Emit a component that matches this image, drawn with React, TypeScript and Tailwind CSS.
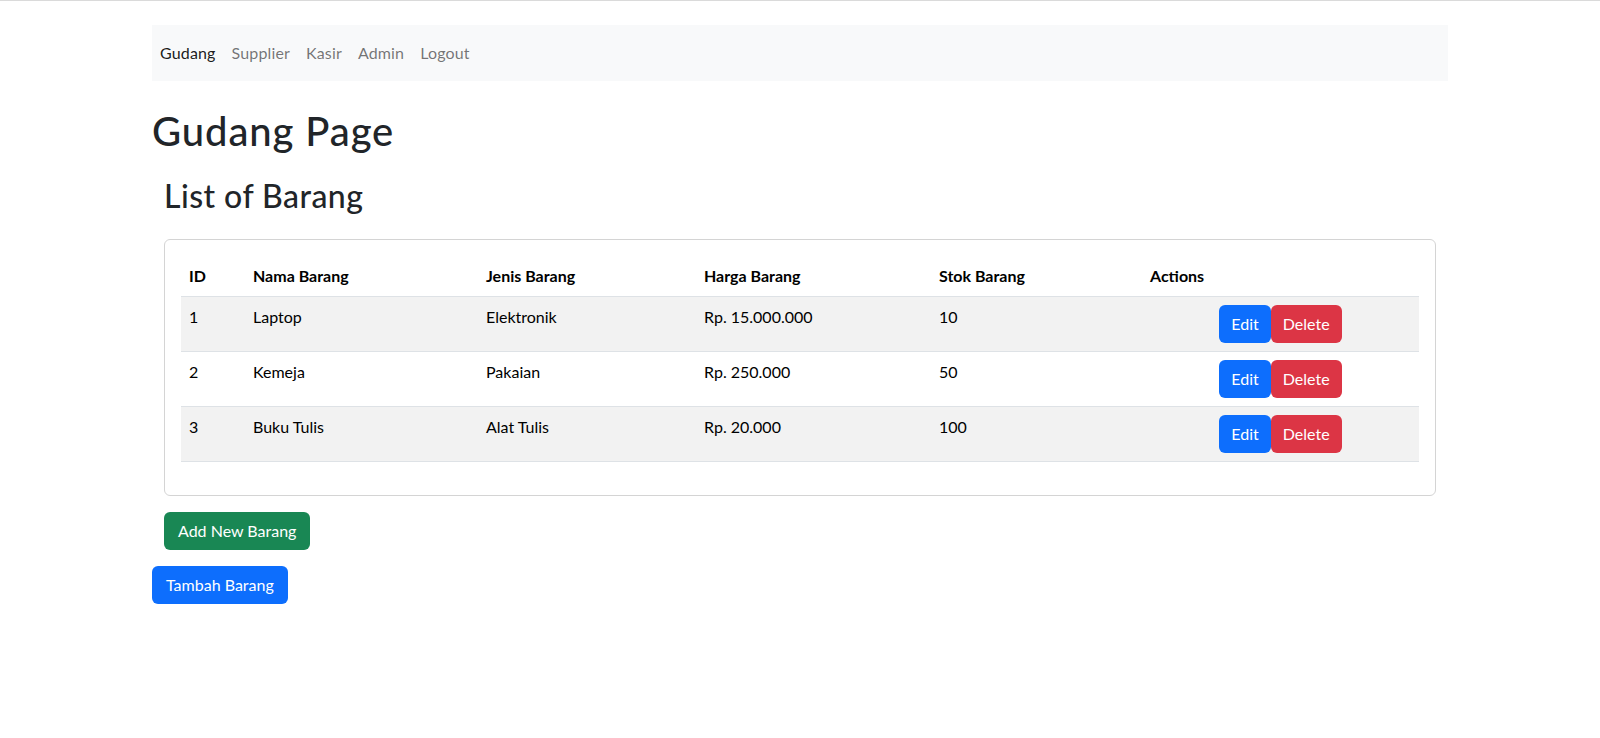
import React from 'react';

interface Barang {
  id: number;
  nama: string;
  jenis: string;
  harga: string;
  stok: number;
}

const barangList: Barang[] = [
  { id: 1, nama: 'Laptop', jenis: 'Elektronik', harga: 'Rp. 15.000.000', stok: 10 },
  { id: 2, nama: 'Kemeja', jenis: 'Pakaian', harga: 'Rp. 250.000', stok: 50 },
  { id: 3, nama: 'Buku Tulis', jenis: 'Alat Tulis', harga: 'Rp. 20.000', stok: 100 },
];

const navLinks = ['Gudang', 'Supplier', 'Kasir', 'Admin', 'Logout'];

export default function App() {
  return (
    <div
      className="min-h-screen bg-white border-t border-[#dadada] text-[#212529]"
      style={{ fontFamily: 'Lato, "Noto Sans", sans-serif' }}
    >
      <div className="mx-auto w-[1320px] px-3 pt-6">
        <nav className="flex h-14 items-center bg-[#f8f9fa]">
          <ul className="flex">
            {navLinks.map((link, i) => (
              <li key={link}>
                <a
                  href="#"
                  className={`block px-2 text-base leading-6 tracking-[0.15px] ${
                    i === 0 ? 'text-black/90' : 'text-black/55'
                  }`}
                >
                  {link}
                </a>
              </li>
            ))}
          </ul>
        </nav>

        <h1 className="mt-[26px] mb-2 text-[40px] font-medium leading-[48px] tracking-[0.9px]">
          Gudang Page
        </h1>

        <div className="px-3 mt-[22px]">
          <h2 className="mb-2 text-[32px] font-medium leading-[38px] tracking-[0.45px]">
            List of Barang
          </h2>

          <div className="mt-6 rounded-md border border-[#d4d4d4] p-4 pb-[17px]">
            <table className="mb-4 w-full border-collapse text-base leading-6 text-black">
              <thead>
                <tr className="border-b border-[#dee2e6] text-left font-bold">
                  <th className="w-[64px] p-2">ID</th>
                  <th className="w-[233px] p-2">Nama Barang</th>
                  <th className="w-[218px] p-2">Jenis Barang</th>
                  <th className="w-[235px] p-2">Harga Barang</th>
                  <th className="w-[211px] p-2">Stok Barang</th>
                  <th className="p-2">Actions</th>
                </tr>
              </thead>
              <tbody>
                {barangList.map((b, i) => (
                  <tr
                    key={b.id}
                    className={`border-b border-[#dee2e6] align-top ${
                      i % 2 === 0 ? 'bg-[#f2f2f2]' : 'bg-white'
                    }`}
                  >
                    <td className="p-2">{b.id}</td>
                    <td className="p-2">{b.nama}</td>
                    <td className="p-2">{b.jenis}</td>
                    <td className="p-2">{b.harga}</td>
                    <td className="p-2">{b.stok}</td>
                    <td className="p-2">
                      <div className="flex justify-center">
                        <button className="h-[38px] rounded-md bg-[#0d6efd] px-3 text-white">
                          Edit
                        </button>
                        <button className="h-[38px] rounded-md bg-[#dc3545] px-3 text-white">
                          Delete
                        </button>
                      </div>
                    </td>
                  </tr>
                ))}
              </tbody>
            </table>
          </div>

          <button className="mt-4 h-[38px] rounded-md bg-[#198754] px-[14px] text-base text-white">
            Add New Barang
          </button>
        </div>

        <button className="mt-4 h-[38px] rounded-md bg-[#0d6efd] px-[14px] text-base text-white">
          Tambah Barang
        </button>
      </div>
    </div>
  );
}
